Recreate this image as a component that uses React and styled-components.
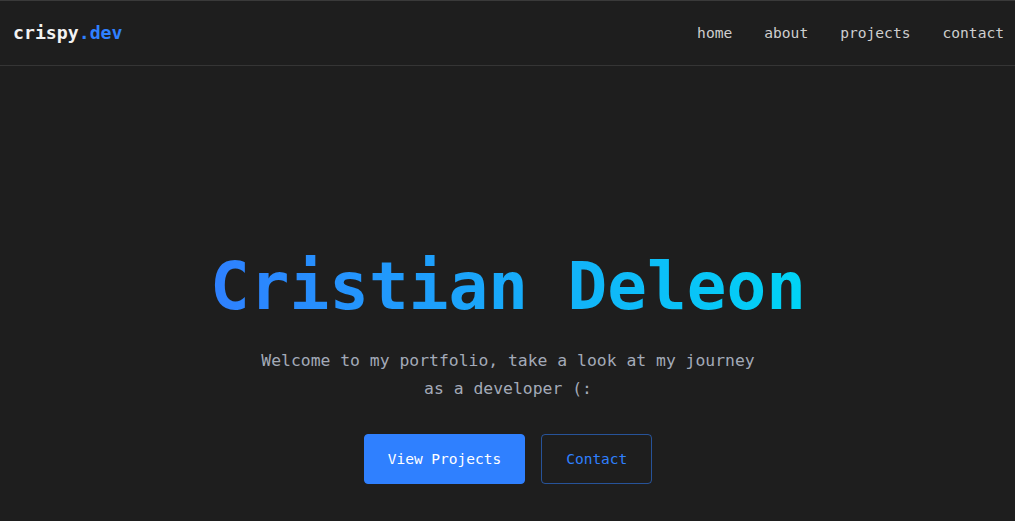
import React from 'react';
import styled, { createGlobalStyle } from 'styled-components';

const GlobalStyle = createGlobalStyle`
  html, body { margin: 0; padding: 0; background: #1e1e1e; }
  body { font-family: "DejaVu Sans Mono", "Liberation Mono", monospace; color: #d4d4d4; }
`;

const Page = styled.div`
  min-height: 100vh; background: #1e1e1e;
`;

const Header = styled.header`
  display: flex; align-items: center; justify-content: space-between;
  height: 63px; padding: 0 11px 1px 13px;
  border-top: 1px solid #3a3a3a; border-bottom: 1px solid #353535;
`;

const Logo = styled.a`
  font-size: 18.2px; font-weight: bold; color: #f2f2f2; text-decoration: none;
  & > span { color: #2f80ff; }
`;

const Nav = styled.nav`
  display: flex; gap: 32px;
`;

const NavLink = styled.a`
  font-size: 14.6px; color: #cfcfcf; text-decoration: none;
`;

const Hero = styled.section`
  display: flex; flex-direction: column; align-items: center; text-align: center;
  padding-top: 181px; padding-left: 1px;
`;

const Title = styled.h1`
  margin: 0; font-size: 66px; line-height: 80px; font-weight: bold;
  background: linear-gradient(90deg, #2f80ff 0%, #00d4f5 100%);
  -webkit-background-clip: text; background-clip: text; color: transparent;
`;

const Subtitle = styled.p`
  margin: 20px 0 0; max-width: 510px; font-size: 16.4px; line-height: 28px; color: #a3aab8;
`;

const Actions = styled.div`
  display: flex; gap: 16px; margin-top: 31px;
`;

const Button = styled.a`
  display: inline-flex; align-items: center; justify-content: center;
  height: 50px; box-sizing: border-box; padding: 0 ${p => p.primary ? 23 : 24}px; border-radius: 4px;
  font-size: 14.5px; text-decoration: none;
  border: 1px solid ${p => p.primary ? '#2f80ff' : 'rgba(47, 128, 255, 0.55)'};
  background: ${p => p.primary ? '#2f80ff' : 'transparent'};
  color: ${p => p.primary ? '#ffffff' : '#2f80ff'};
`;

const App = () => (
  <Page>
    <GlobalStyle />
    <Header>
      <Logo href="#">crispy<span>.dev</span></Logo>
      <Nav>
        {['home', 'about', 'projects', 'contact'].map(l => (
          <NavLink key={l} href={`#${l}`}>{l}</NavLink>
        ))}
      </Nav>
    </Header>
    <Hero>
      <Title>Cristian Deleon</Title>
      <Subtitle>Welcome to my portfolio, take a look at my journey as a developer (:</Subtitle>
      <Actions>
        <Button primary href="#projects">View Projects</Button>
        <Button href="#contact">Contact</Button>
      </Actions>
    </Hero>
  </Page>
);

export default App;
